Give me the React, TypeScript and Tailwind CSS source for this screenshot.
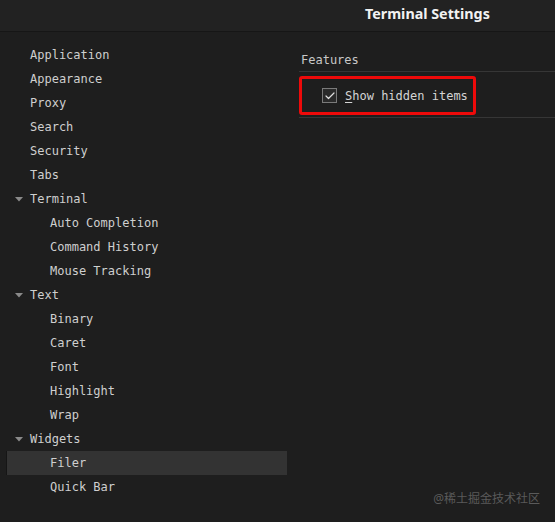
import { Check } from 'lucide-react';

type Item = { label: string; depth: 0 | 1; group?: boolean; selected?: boolean };

const items: Item[] = [
  { label: 'Application', depth: 0 },
  { label: 'Appearance', depth: 0 },
  { label: 'Proxy', depth: 0 },
  { label: 'Search', depth: 0 },
  { label: 'Security', depth: 0 },
  { label: 'Tabs', depth: 0 },
  { label: 'Terminal', depth: 0, group: true },
  { label: 'Auto Completion', depth: 1 },
  { label: 'Command History', depth: 1 },
  { label: 'Mouse Tracking', depth: 1 },
  { label: 'Text', depth: 0, group: true },
  { label: 'Binary', depth: 1 },
  { label: 'Caret', depth: 1 },
  { label: 'Font', depth: 1 },
  { label: 'Highlight', depth: 1 },
  { label: 'Wrap', depth: 1 },
  { label: 'Widgets', depth: 0, group: true },
  { label: 'Filer', depth: 1, selected: true },
  { label: 'Quick Bar', depth: 1 },
];

const mono = "font-['DejaVu_Sans_Mono','Liberation_Mono',monospace]";

export default function App() {
  return (
    <div className={`relative w-[555px] h-[522px] overflow-hidden bg-[#1e1e1e] text-[#cfcfcf] ${mono}`}>
      {/* Title bar */}
      <div className="h-[32px] border-b border-[#161616] bg-[#222222] flex items-center pl-[365px] pb-[4px]">
        <span className="font-['Noto_Sans','DejaVu_Sans',sans-serif] font-bold text-[14.3px] text-[#f2f2f2]">
          Terminal Settings
        </span>
      </div>

      <div className="flex">
        {/* Navigation tree */}
        <div className="w-[288px] pl-[7px] pt-[11px] shrink-0">
          {items.map((it) => (
            <div
              key={it.label}
              className={`h-6 flex items-center text-[12px] leading-none ${
                it.selected ? 'bg-[#333333] mr-[1px] shadow-[-1px_0_0_#151515]' : ''
              }`}
            >
              <span className="w-[23px] flex justify-center pl-[1px]">
                {it.group && (
                  <svg width="8" height="5" viewBox="0 0 8 5">
                    <path d="M0 0h8L4 4.5z" fill="#8a8a8a" />
                  </svg>
                )}
              </span>
              <span className={it.depth === 1 ? 'pl-5' : ''}>{it.label}</span>
            </div>
          ))}
        </div>

        {/* Content */}
        <div className="flex-1 pl-[11px]">
          <div className="h-[40px] border-b border-[#363636] flex items-end pb-[1px]">
            <span className="ml-[2px] text-[12px] leading-5 text-[#c8c8c8]">Features</span>
          </div>
          <div className="h-[46px] border-b border-[#363636] pt-[4px]">
            <div className="w-[177px] h-[39px] border-[3px] border-[#ee0a0a] rounded-[3px] flex items-center pl-[20px]">
              <span className="w-[15px] h-[15px] border border-[#7a7a7a] bg-[#2a2a2a] flex items-center justify-center">
                <Check size={12} strokeWidth={2.4} color="#e0e0e0" />
              </span>
              <span className="ml-[8px] text-[12px] text-[#d4d4d4]">
                <span className="underline underline-offset-2">S</span>how hidden items
              </span>
            </div>
          </div>
        </div>
      </div>

      <span className="absolute right-[15px] bottom-[14px] text-[12px] text-[#5a5a5a] font-['Noto_Sans','Noto_Sans_CJK_SC',sans-serif]">
        @稀土掘金技术社区
      </span>
    </div>
  );
}
